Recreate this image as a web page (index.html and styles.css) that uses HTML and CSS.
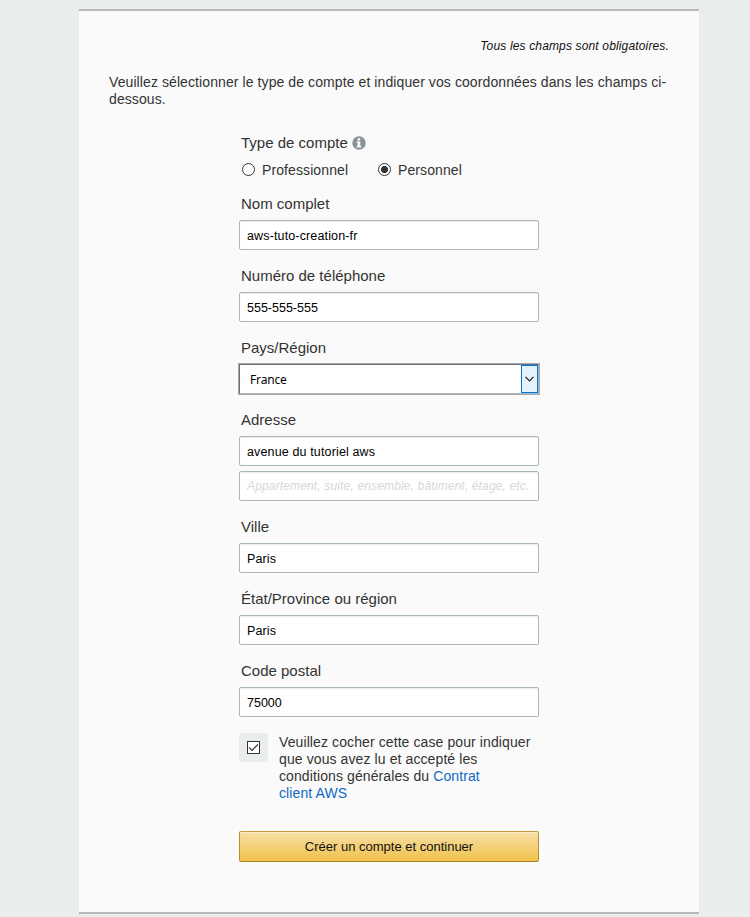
FILE: index.html
```html
<!DOCTYPE html>
<html lang="fr">
<head>
<meta charset="utf-8">
<title>Créer un compte</title>
<link rel="stylesheet" href="styles.css">
</head>
<body>
<main class="panel">
  <p class="required"><span>Tous les champs sont obligatoires.</span></p>
  <p class="intro">Veuillez sélectionner le type de compte et indiquer vos coordonnées dans les champs ci-<br>dessous.</p>
  <form class="form">
    <div class="type-label">
      <span class="label">Type de compte</span>
      <svg class="info" width="14" height="14" viewBox="0 0 14 14"><circle cx="7" cy="7" r="6.7" fill="#879196"/><path d="M5.6 2.2h2.6v2.2H5.6zM4.7 5.4h3.6v4.3h1v1.7H4.6V9.7h1V7.1h-.9z" fill="#fafafa"/></svg>
    </div>
    <div class="radios">
      <label class="choice choice-pro"><input type="radio" name="type"><span>Professionnel</span></label>
      <label class="choice"><input type="radio" name="type" checked><span>Personnel</span></label>
    </div>
    <div class="field"><label class="label" for="nom">Nom complet</label><input class="input wide" id="nom" value="aws-tuto-creation-fr"></div>
    <div class="field"><label class="label" for="tel">Numéro de téléphone</label><input class="input" id="tel" value="555-555-555"></div>
    <div class="field"><label class="label">Pays/Région</label>
      <div class="select"><span class="select-value">France</span><span class="select-button"><svg width="9" height="6" viewBox="0 0 9 6"><path d="M.5 .8 4.5 4.8 8.5 .8" fill="none" stroke="#222" stroke-width="1.2"/></svg></span></div>
    </div>
    <div class="field"><label class="label" for="adr">Adresse</label><input class="input wide" id="adr" value="avenue du tutoriel aws"><input class="input second" placeholder="Appartement, suite, ensemble, bâtiment, étage, etc."></div>
    <div class="field"><label class="label" for="ville">Ville</label><input class="input wide" id="ville" value="Paris"></div>
    <div class="field"><label class="label" for="etat">État/Province ou région</label><input class="input wide" id="etat" value="Paris"></div>
    <div class="field"><label class="label" for="cp">Code postal</label><input class="input" id="cp" value="75000"></div>
    <div class="terms">
      <span class="check"><svg width="13" height="13" viewBox="0 0 13 13"><rect x=".5" y=".5" width="12" height="12" fill="#fff" stroke="#333"/><path d="m2 6.3 3 3 6-6" fill="none" stroke="#333" stroke-width="1.2"/></svg></span>
      <p class="terms-text">Veuillez cocher cette case pour indiquer<br>que vous avez lu et accepté les<br>conditions générales du <a href="#">Contrat<br>client AWS</a></p>
    </div>
    <button class="submit" type="button">Créer un compte et continuer</button>
  </form>
</main>
</body>
</html>
```
FILE: styles.css
```css
* { box-sizing: border-box; }
body {
  margin: 0;
  padding-top: 9px;
  height: 917px;
  overflow: hidden;
  background: #e9eded;
  color: #333;
  font-family: "Liberation Sans", Arial, sans-serif;
  font-size: 14px;
  line-height: 17px;
}
p { margin: 0; }
.panel {
  width: 620px;
  height: 905px;
  margin-left: 79px;
  padding: 26px 30px 0;
  background: #fafafa;
  border-top: 2px solid #b9b9b9;
  border-bottom: 2px solid #b9b9b9;
}
.required {
  color: #111;
  font-size: 12px;
  line-height: 18px;
  font-style: italic;
  text-align: right;
  letter-spacing: .15px;
}
.intro {
  margin-top: 19px;
  white-space: nowrap;
  letter-spacing: .09px;
}
.form { width: 300px; margin: 25px 0 0 130px; }
.type-label { display: flex; align-items: center; height: 20px; }
.label {
  display: block;
  padding-left: 2px;
  line-height: 20px;
  font-size: 15px;
}
.info { margin-left: 4px; }
.radios { display: flex; height: 20px; margin: 7px 0 14px; padding-left: 3px; }
.choice {
  display: flex;
  align-items: center;
  gap: 7px;
  letter-spacing: .1px;
}
.choice-pro { width: 136px; }
.choice input {
  appearance: none;
  width: 13px;
  height: 13px;
  margin: 0 0 1px;
  border: 1px solid #333;
  border-radius: 50%;
  background: #fff;
}
.choice input:checked { background: radial-gradient(circle, #333 3.2px, #fff 3.9px); }
.field { margin-bottom: 16px; }
.input {
  display: block;
  width: 300px;
  height: 30px;
  margin-top: 6px;
  padding: 2px 7px 0;
  border: 1px solid #aab7b8;
  border-radius: 2px;
  background: #fff;
  box-shadow: inset 0 1px 1px #eee;
  color: #000;
  font: 12.5px "Liberation Sans", Arial, sans-serif;
  outline: 0;
}
.wide { letter-spacing: .14px; }
.second {
  margin-top: 5px;
  padding-top: 0;
  font-size: 12px;
  letter-spacing: .15px;
}
.input::placeholder { color: #d5d8d9; font-style: italic; }
.select {
  display: flex;
  align-items: center;
  justify-content: space-between;
  height: 30px;
  margin-top: 6px;
  padding-left: 10px;
  border: 1px solid #687078;
  border-right-color: #aab7b8;
  border-bottom-color: #aab7b8;
  background: #fff;
  box-shadow: 0 0 0 1px #a9a9ad;
  color: #000;
}
.select-value {
  padding-top: 1px;
  font: 12px/16px "Noto Sans", sans-serif;
  letter-spacing: -.15px;
}
.select-button {
  display: flex;
  align-items: center;
  justify-content: center;
  width: 17px;
  height: 28px;
  border: 1px solid #0078d7;
  background: #e5f1fb;
}
.terms { display: flex; gap: 11px; }
.check {
  display: flex;
  align-items: center;
  justify-content: center;
  width: 29px;
  height: 29px;
  border-radius: 3px;
  background: #e9eded;
}
.terms-text {
  padding-top: 1px;
  white-space: nowrap;
  letter-spacing: .1px;
}
a { color: #0f68c4; text-decoration: none; }
.submit {
  display: block;
  width: 300px;
  height: 31px;
  margin-top: 29px;
  padding: 0;
  border: 1px solid;
  border-color: #c89b3c #bd8d2c #a77c22;
  border-radius: 2px;
  background: linear-gradient(#f7dfa5, #f0c14b);
  box-shadow: inset 0 1px 0 #fbeccb;
  color: #111;
  font: 13px "Liberation Sans", Arial, sans-serif;
}
```
